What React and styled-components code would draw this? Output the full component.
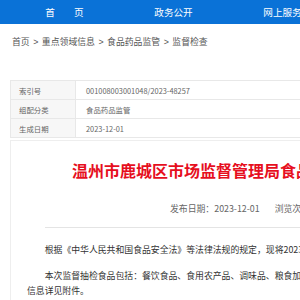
import React from "react";
import styled, { createGlobalStyle } from "styled-components";

const Global = createGlobalStyle`
  html, body { margin: 0; padding: 0; background: #ffffff; overflow: hidden; }
  body { font-family: "Noto Sans CJK SC", "Noto Sans", "Liberation Sans", sans-serif; }
  * { box-sizing: border-box; }
`;

const Page = styled.div`
  width: 420px;
`;

const Nav = styled.nav`
  height: 24px;
  background: #0a72d7;
  display: flex;
  padding-left: 10px;
`;

const NavItem = styled.a`
  width: 109px;
  flex: none;
  color: #ffffff;
  font-size: 9.6px;
  line-height: 24px;
  text-align: center;
  white-space: nowrap;
  text-decoration: none;
`;

const Crumbs = styled.div`
  height: 56px;
  padding: 12px 0 0 12px;
  font-size: 8.86px;
  line-height: 12px;
  color: #555555;
  white-space: nowrap;
`;

const Sep = styled.span`
  margin: 0 3.5px;
  font-family: "Liberation Sans", sans-serif;
`;

const InfoTable = styled.table`
  margin-left: 10px;
  width: 400px;
  border-collapse: collapse;
  font-size: 7.4px;
  color: #666666;
`;

const Row = styled.tr`
  height: 19px;
`;

const Label = styled.td`
  width: 65px;
  background: #f7f7f7;
  border: 1px solid #e8e8e8;
  padding: 0 0 0 8px;
  white-space: nowrap;
`;

const Value = styled.td`
  border: 1px solid #e8e8e8;
  padding: 0 0 0 10px;
  white-space: nowrap;
`;

const Card = styled.div`
  margin: 2px 0 0 10px;
  width: 400px;
  height: 200px;
  border: 1px solid #eeeeee;
  padding: 19px 0 0 16px;
`;

const Title = styled.h1`
  margin: 0 0 0 45px;
  font-size: 16px;
  line-height: 20px;
  font-weight: bold;
  color: #e60f1e;
  white-space: nowrap;
`;

const Meta = styled.div`
  margin: 23px 0 0 143px;
  display: flex;
  gap: 15px;
  font-size: 8.86px;
  line-height: 12px;
  color: #666666;
  white-space: nowrap;
`;

const Divider = styled.div`
  margin: 12px 0 0 18px;
  height: 1px;
  background: #e4e4e4;
`;

const Body = styled.div`
  padding-top: 13.5px;
`;

const Para = styled.p`
  margin: 0 0 11px;
  width: 360px;
  font-size: 8.86px;
  line-height: 15px;
  color: #333333;
  text-indent: 2em;
  white-space: ${(p) => (p.$single ? "nowrap" : "normal")};
`;

export default function App() {
  return (
    <Page>
      <Global />
      <Nav>
        <NavItem>首{"\u3000\u3000"}页</NavItem>
        <NavItem>政务公开</NavItem>
        <NavItem>网上服务</NavItem>
      </Nav>
      <Crumbs>
        首页<Sep>&gt;</Sep>重点领域信息<Sep>&gt;</Sep>食品药品监管<Sep>&gt;</Sep>监督检查
      </Crumbs>
      <InfoTable>
        <tbody>
          <Row>
            <Label>索引号</Label>
            <Value>001008003001048/2023-48257</Value>
          </Row>
          <Row>
            <Label>组配分类</Label>
            <Value>食品药品监管</Value>
          </Row>
          <Row>
            <Label>生成日期</Label>
            <Value>2023-12-01</Value>
          </Row>
        </tbody>
      </InfoTable>
      <Card>
        <Title>温州市鹿城区市场监督管理局食品安全监督抽检信息公告</Title>
        <Meta>
          <span>发布日期：2023-12-01</span>
          <span>浏览次数：</span>
        </Meta>
        <Divider />
        <Body>
          <Para $single>
            根据《中华人民共和国食品安全法》等法律法规的规定，现将2023年抽检信息公告如下：
          </Para>
          <Para>
            本次监督抽检食品包括：餐饮食品、食用农产品、调味品、粮食加工品、饮料、酒类，信息详见附件。
          </Para>
        </Body>
      </Card>
    </Page>
  );
}
